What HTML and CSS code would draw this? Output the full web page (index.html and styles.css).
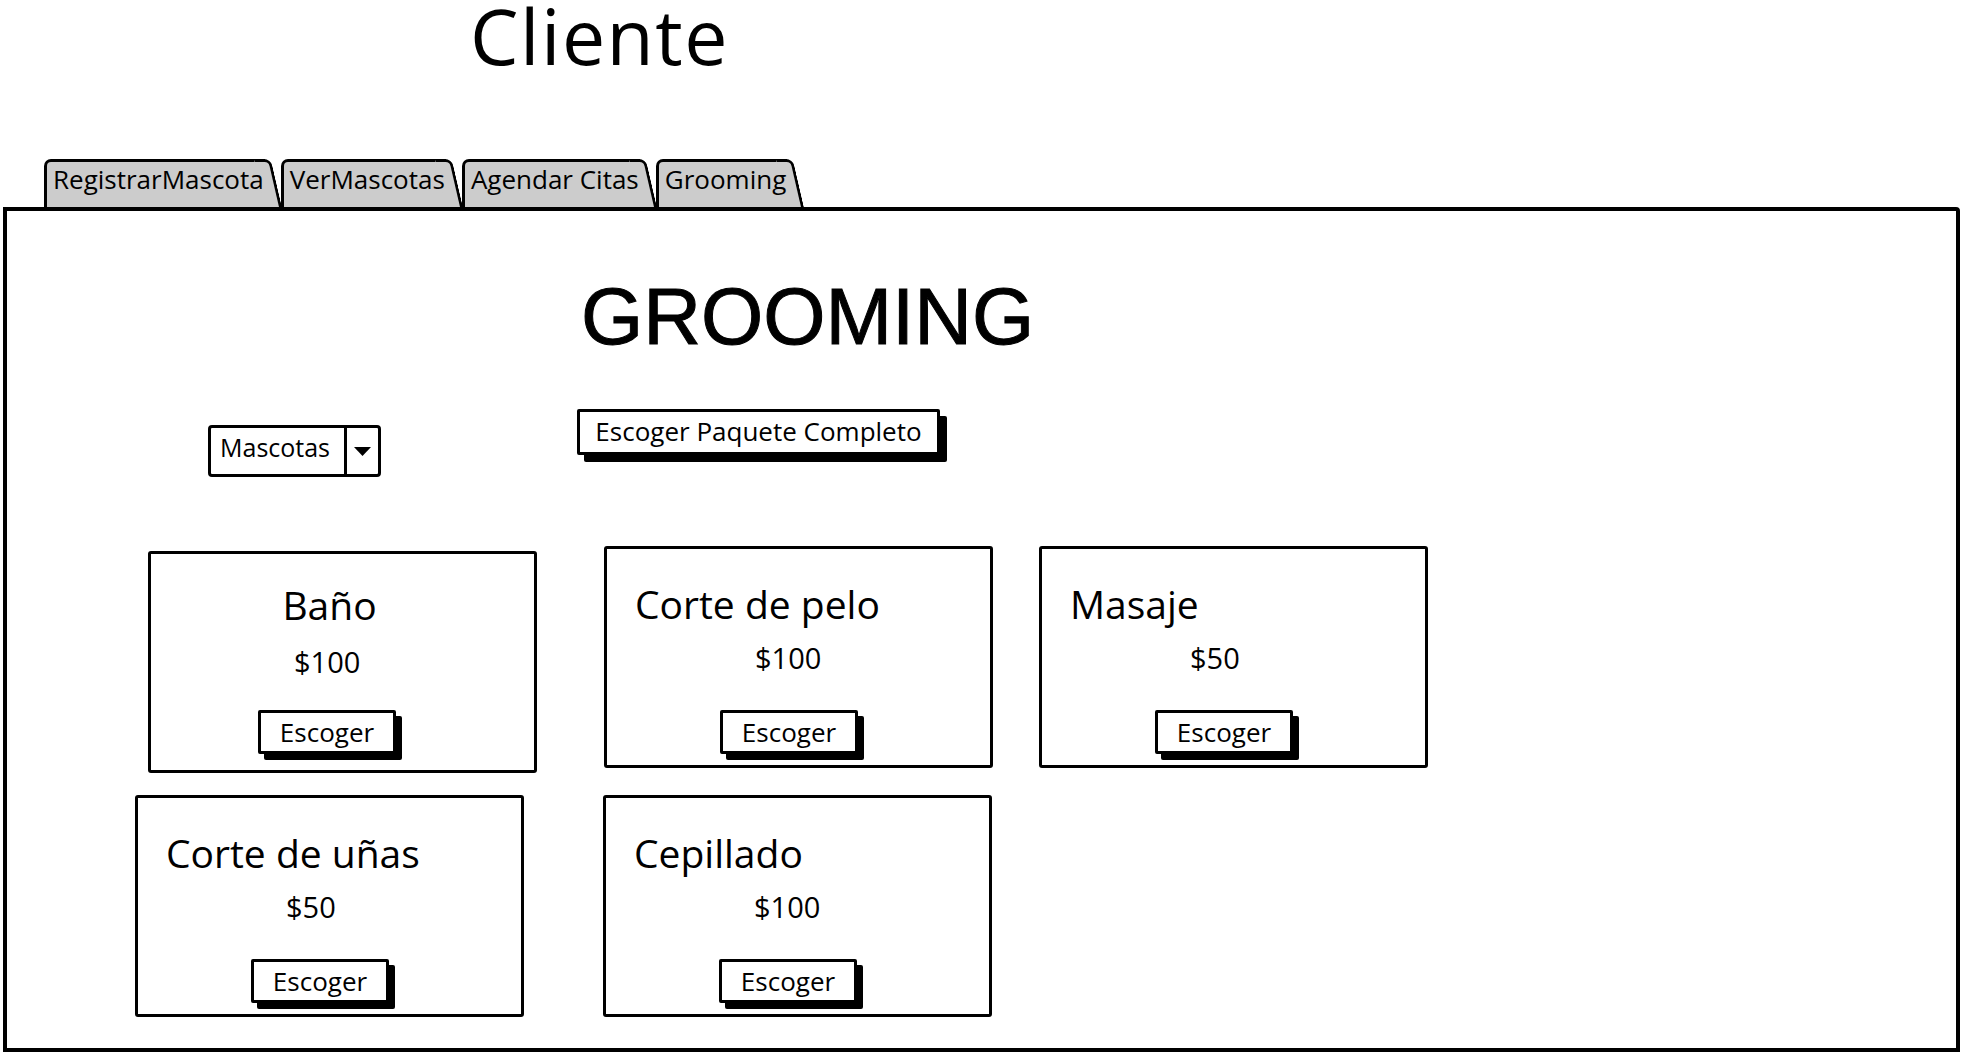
FILE: index.html
```html
<!DOCTYPE html>
<html lang="es">
<head>
    <meta charset="UTF-8">
    <title>Cliente - Grooming</title>
    <link rel="stylesheet" href="styles.css">
</head>
<body>
    <h1 class="page-title">Cliente</h1>

    <div class="tabs">
        <div class="tab"><span>RegistrarMascota</span></div>
        <div class="tab"><span>VerMascotas</span></div>
        <div class="tab"><span>Agendar Citas</span></div>
        <div class="tab"><span>Grooming</span></div>
    </div>

    <div class="panel">
        <h2 class="panel-title">GROOMING</h2>

        <div class="controls">
            <div class="select">
                <span class="select-label">Mascotas</span>
                <span class="select-arrow">
                    <svg width="17" height="9" viewBox="0 0 17 9"><path d="M0 0 H17 L8.5 9 Z" fill="#000"/></svg>
                </span>
            </div>
            <button class="btn btn-wide">Escoger Paquete Completo</button>
        </div>

        <div class="cards row-1">
            <div class="card card-bano">
                <div class="card-title">Baño</div>
                <div class="card-price">$100</div>
                <button class="btn btn-small">Escoger</button>
            </div>
            <div class="card card-pelo">
                <div class="card-title">Corte de pelo</div>
                <div class="card-price">$100</div>
                <button class="btn btn-small">Escoger</button>
            </div>
            <div class="card card-masaje">
                <div class="card-title">Masaje</div>
                <div class="card-price">$50</div>
                <button class="btn btn-small">Escoger</button>
            </div>
        </div>

        <div class="cards row-2">
            <div class="card card-unas">
                <div class="card-title">Corte de uñas</div>
                <div class="card-price">$50</div>
                <button class="btn btn-small">Escoger</button>
            </div>
            <div class="card card-cepillado">
                <div class="card-title">Cepillado</div>
                <div class="card-price">$100</div>
                <button class="btn btn-small">Escoger</button>
            </div>
        </div>
    </div>
</body>
</html>
```

FILE: styles.css
```css
* {
    margin: 0;
    padding: 0;
    box-sizing: border-box;
}
body {
    background: #fff;
    color: #000;
    font-family: "Open Sans", "Liberation Sans", sans-serif;
}

.page-title {
    font-size: 77px;
    line-height: 72px;
    font-weight: normal;
    letter-spacing: 1.5px;
    padding-left: 470px;
}

/* tabs */
.tabs {
    display: flex;
    margin: 87px 0 0 44px;
}
.tab {
    position: relative;
    height: 48px;
    padding: 0 1px 0 6px;
    margin-right: 16px;
    background: #ccc;
    border: 3px solid #000;
    border-right: none;
    border-bottom: none;
    border-radius: 7px 0 0 0;
    font-size: 26px;
    line-height: 34px;
}
.tab::before {
    content: "";
    position: absolute;
    left: 100%;
    top: -3px;
    bottom: 0;
    width: 14px;
    background: #ccc;
    border-top: 3px solid #000;
    border-right: 3px solid #000;
    border-radius: 0 7px 0 0;
    transform: skewX(13deg);
    transform-origin: 0 100%;
}
.tab span {
    position: relative;
}

/* main panel */
.panel {
    height: 845px;
    margin: 0 2px 0 3px;
    border: 4px solid #000;
    border-radius: 0 4px 0 0;
}
.panel-title {
    margin: 66px 0 0 574px;
    font-family: "Liberation Sans", sans-serif;
    font-size: 80px;
    line-height: 80px;
    font-weight: normal;
    -webkit-text-stroke: 1px #000;
}

.controls {
    display: flex;
    align-items: flex-start;
    margin-top: 52px;
}
.select {
    display: flex;
    width: 173px;
    height: 52px;
    margin: 16px 0 0 201px;
    border: 3px solid #000;
    border-radius: 4px;
}
.select-label {
    flex: 1;
    padding: 2px 0 0 9px;
    border-right: 3px solid #000;
    font-size: 25px;
    line-height: 34px;
}
.select-arrow {
    width: 31px;
    display: flex;
    align-items: center;
    justify-content: center;
}

.btn {
    display: block;
    background: #fff;
    color: #000;
    border: 3px solid #000;
    border-radius: 2px;
    font-family: inherit;
    text-align: center;
    cursor: pointer;
}
.btn-wide {
    width: 363px;
    height: 46px;
    margin-left: 196px;
    padding: 2px 0 4px;
    font-size: 26px;
    line-height: 34px;
    box-shadow: 7px 7px 0 #000;
}
.btn-small {
    width: 138px;
    height: 44px;
    margin: 33px 0 0 113px;
    padding: 1px 0 0;
    font-size: 26px;
    line-height: 35px;
    box-shadow: 6px 6px 0 #000;
}

/* service cards */
.cards {
    display: flex;
    align-items: flex-start;
}
.row-1 {
    margin-top: 69px;
    padding-left: 141px;
}
.row-2 {
    margin-top: 22px;
    padding-left: 128px;
}
.card {
    width: 389px;
    height: 222px;
    padding-top: 30px;
    border: 3px solid #000;
    border-radius: 3px;
}
.card-title {
    padding-left: 28px;
    font-size: 39px;
    line-height: 50px;
}
.card-price {
    margin-top: 10px;
    padding-left: 148px;
    font-size: 29px;
    line-height: 38px;
}

.card-bano {
    margin-top: 5px;
    padding-top: 26px;
}
.card-bano .card-title {
    padding: 0 26px 0 0;
    text-align: center;
}
.card-bano .card-price {
    margin-top: 13px;
    padding-left: 143px;
}
.card-bano .btn-small {
    margin: 29px 0 0 107px;
}
.card-pelo {
    margin-left: 67px;
}
.card-masaje {
    margin-left: 46px;
}
.card-cepillado {
    margin-left: 79px;
}
```
